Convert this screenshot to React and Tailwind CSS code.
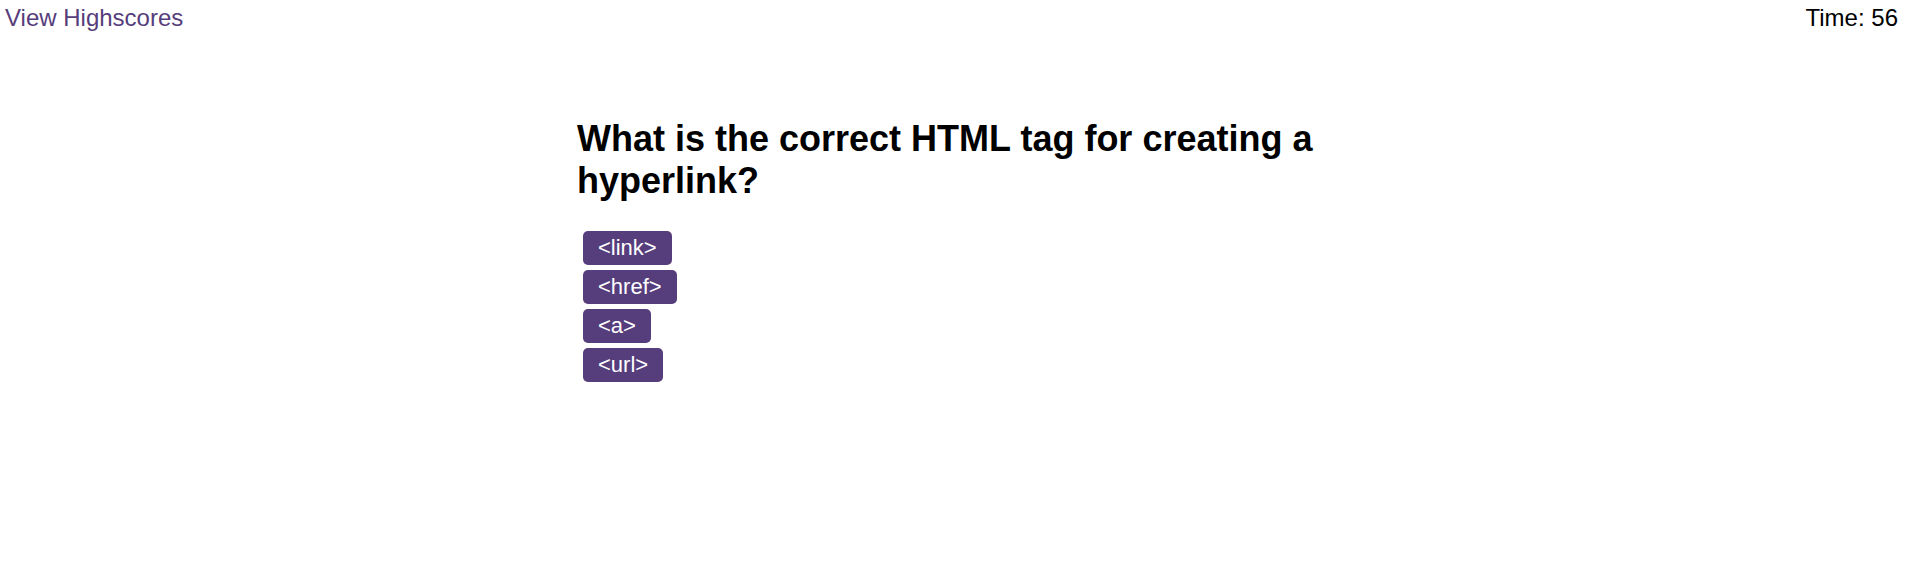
import React, { useState } from "react";

const questions = [
    {
        title: "What is the correct HTML tag for creating a hyperlink?",
        choices: ["<link>", "<href>", "<a>", "<url>"],
    },
];

const App = () => {
    const [time] = useState(56);
    const [current] = useState(0);
    const q = questions[current];

    return (
        <div className="min-h-[573px] bg-white text-black font-['Liberation_Sans',Arial,sans-serif]">
            {/* header bar */}
            <header className="flex justify-between items-start pt-[4px] pl-[5px] pr-[8px] text-[24px] leading-[normal]">
                <a href="#" className="text-[#563d7c]">
                    View Highscores
                </a>
                <span>Time: {time}</span>
            </header>

            <main className="w-[752px] mx-auto mt-[86px]">
                <h2 className="text-[36px] font-bold leading-[normal] mb-[29px]">
                    {q.title}
                </h2>
                <div className="flex flex-col items-start gap-[5px] ml-[6px]">
                    {q.choices.map((c) => (
                        <button
                            key={c}
                            className="bg-[#563d7c] text-white text-[22px] leading-[normal] px-[15px] py-[4px] rounded-[5px]"
                        >
                            {c}
                        </button>
                    ))}
                </div>
            </main>
        </div>
    );
};

export default App;
